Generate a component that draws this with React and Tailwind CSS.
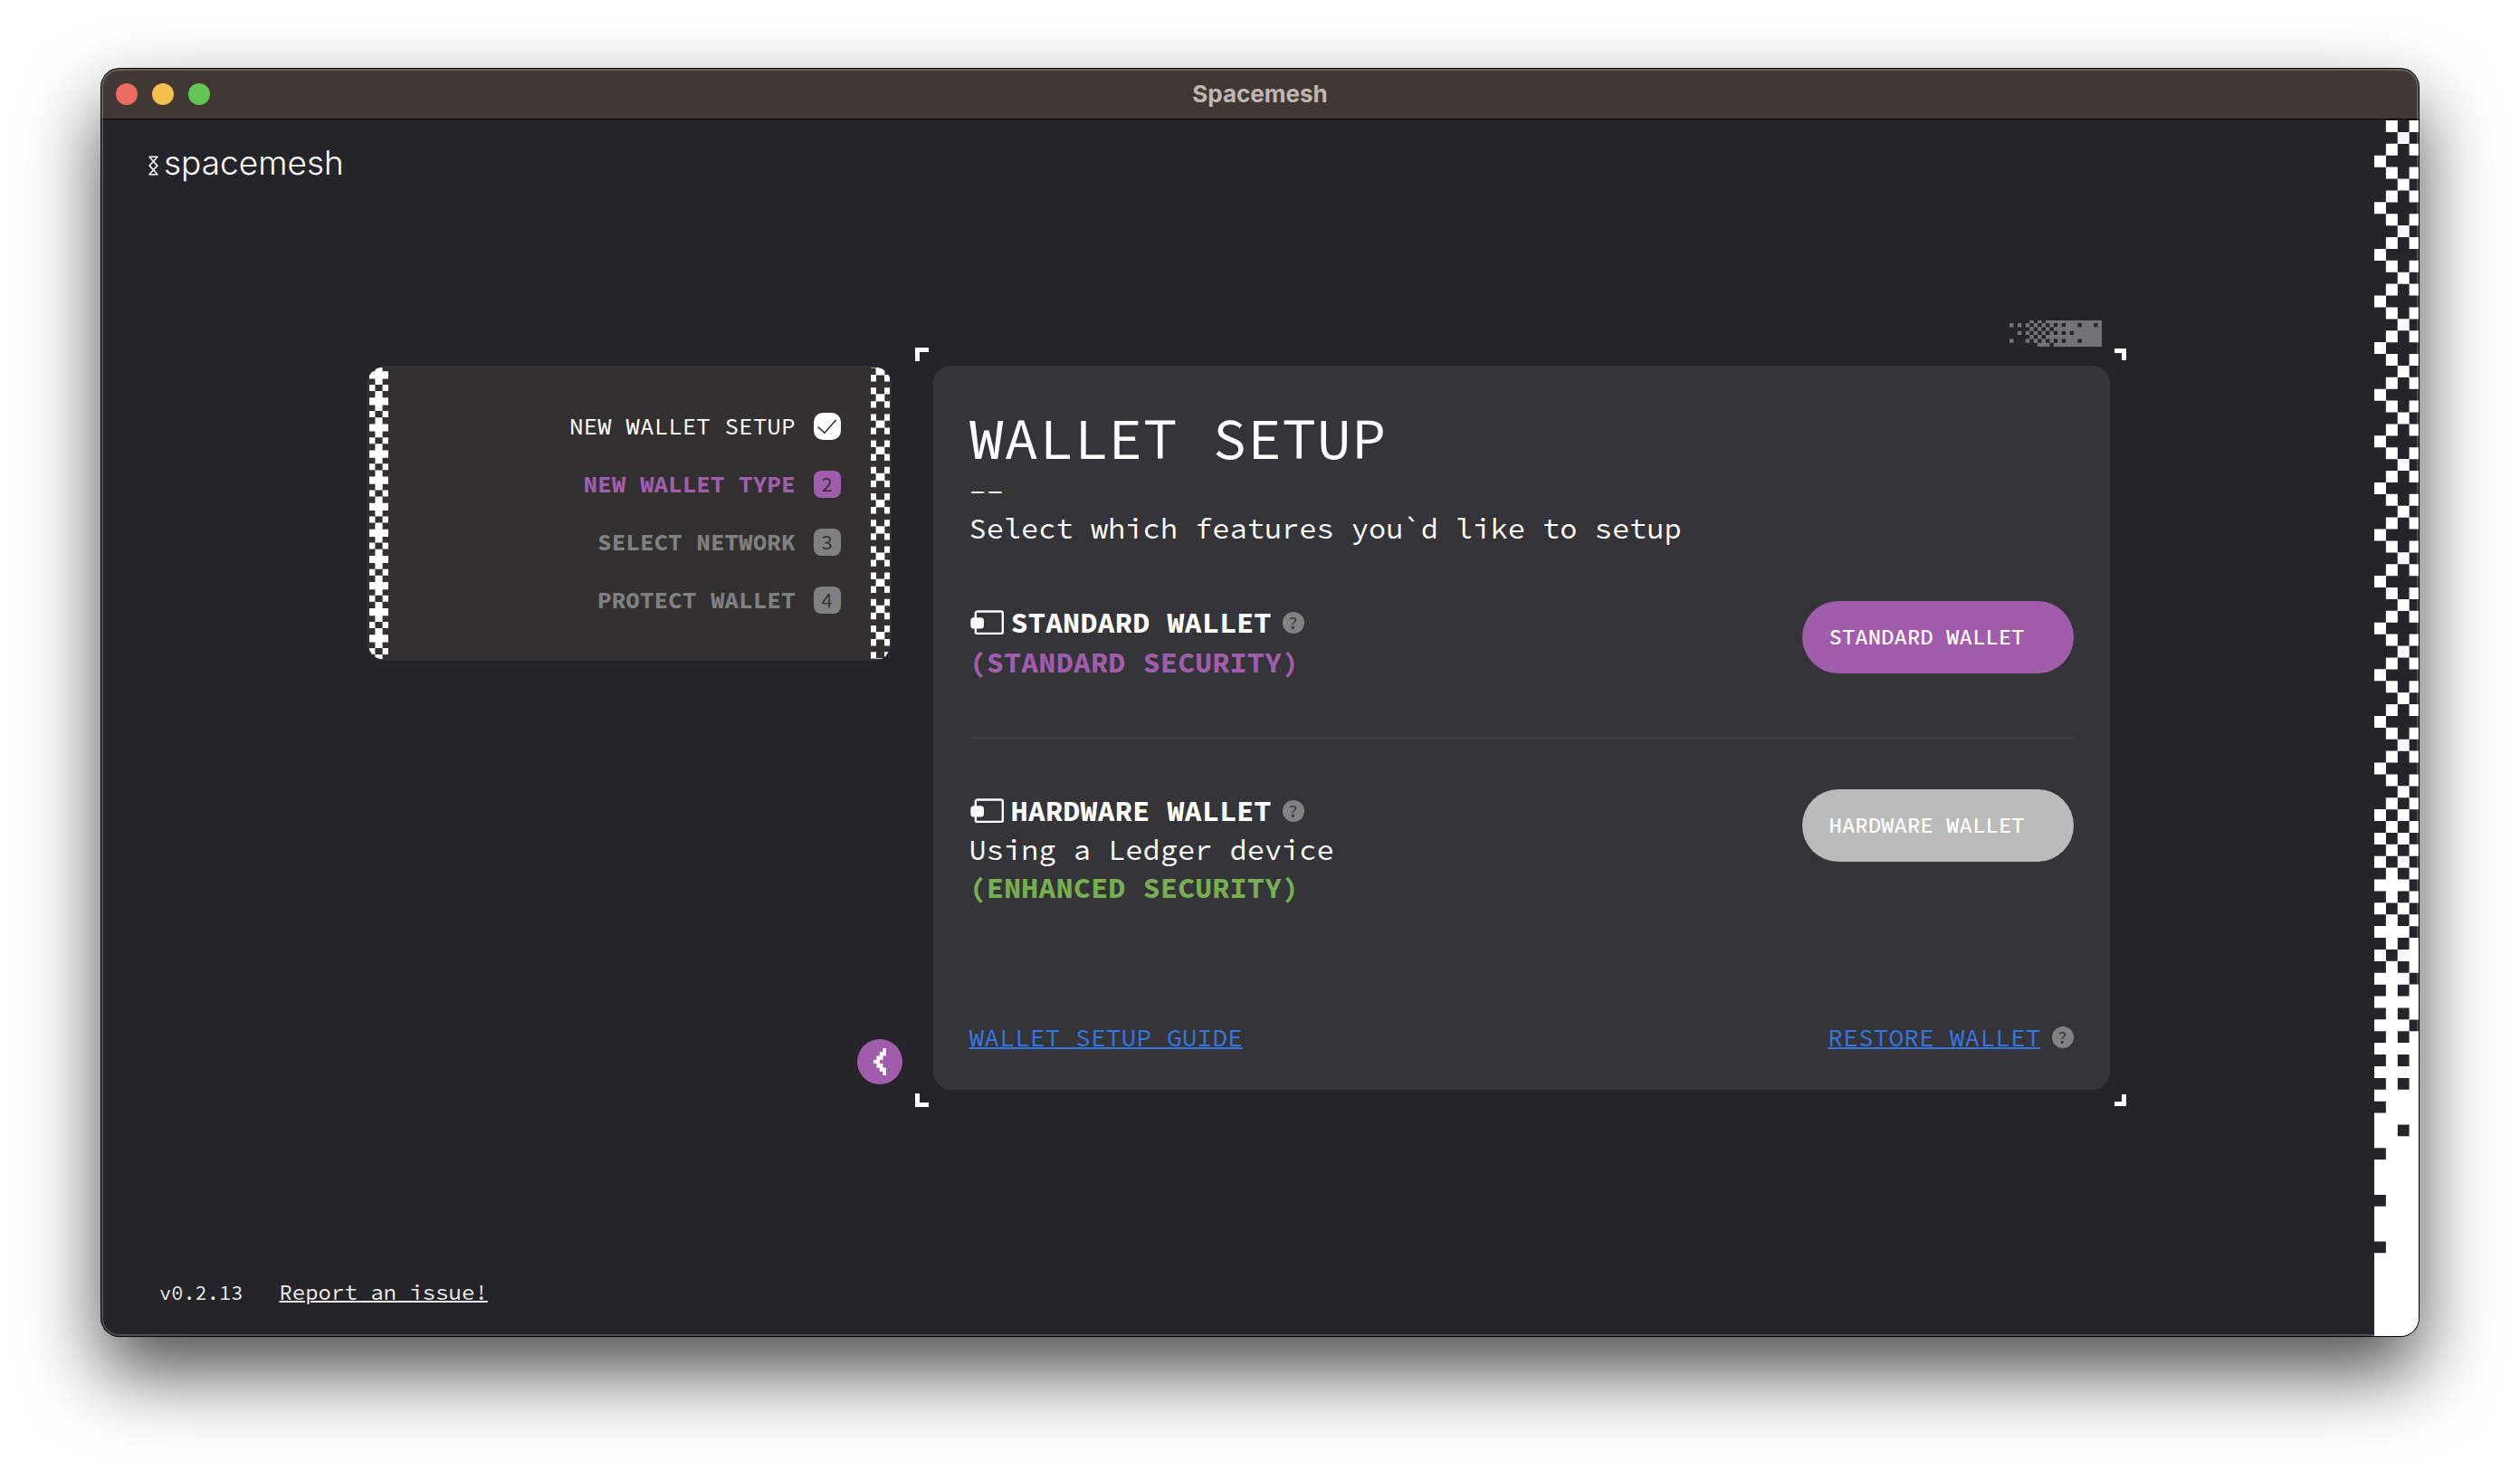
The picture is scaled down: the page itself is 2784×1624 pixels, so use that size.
const STEPS = [
  { label: 'NEW WALLET SETUP', state: 'done' },
  { label: 'NEW WALLET TYPE', state: 'current' },
  { label: 'SELECT NETWORK', state: 'todo' },
  { label: 'PROTECT WALLET', state: 'todo' },
];

/* Filled columns (1 to 4) for each row of the checkered edge, top to bottom. */
const EDGE_ROWS = [
  ...Array.from({ length: 57 }, (_, i) => ['24', '3', '24', '1'][i % 4]),
  '3', '24', '13', '24', '13', '24', '13', '24', '123', '24', '13', '24',
  '123', '24', '134', '24', '123', '24', '1234', '24', '123', '24', '1234',
  '24', '1234', '24', '1234', '234', '1234', '124', '1234', '234', '1234',
  '1234', '1234', '234', '1234', '1234', '1234', '234', '1234', '1234',
  '1234', '1234', '1234', '1234', '1234', '1234',
];

const DITHER_ROWS = [
  '.....#.#.##############',
  '#.#.#.#.#.#.#.###.###.#',
  '.....#.#.#.############',
  '..#.#.#.#.#.#.#.#######',
  '.....#.#.##############',
  '#...#.#.#.#.#.###.#####',
  '.......###.############',
];

function CheckeredEdge() {
  const d = EDGE_ROWS.map((cols, r) =>
    [...cols]
      .map((c) => `M${(Number(c) - 1) * 12.6} ${(r * 12.9 + 1).toFixed(1)}h12.7v13h-12.7z`)
      .join('')
  ).join('');
  return (
    <svg className="absolute inset-0 h-full w-full" viewBox="0 0 48 1344" preserveAspectRatio="none" aria-hidden="true">
      <path d={d} fill="#fff" />
    </svg>
  );
}

function Dither() {
  const d = DITHER_ROWS.map((row, r) =>
    [...row].map((c, k) => (c === '#' ? `M${k * 20} ${r * 20}h20.4v20.4h-20.4z` : '')).join('')
  ).join('');
  return (
    <svg
      className="absolute right-[9px] bottom-full mb-[21px] h-[29px] w-[102px]"
      viewBox="0 6 460 134"
      preserveAspectRatio="none"
      aria-hidden="true"
    >
      <path d={d} fill="#737276" />
    </svg>
  );
}

function PlusStrip() {
  return (
    <svg className="absolute inset-y-0.5 left-[3px] h-[322px] w-[21px]" viewBox="0 3 21 322" aria-hidden="true">
      <clipPath id="plus-clip">
        <path d="M0 3H21V325H12Q4 323 0 315V12Q4 5 12 3z" />
      </clipPath>
      <g fill="#fff" clipPath="url(#plus-clip)">
        {Array.from({ length: 12 }, (_, i) => {
          const y = i * 29.1;
          return (
            <path
              key={i}
              d={`M6.4 ${y}h8.2v22h-8.2zM0 ${y + 7.2}h21v8.2h-21zM0 ${y + 22}h6.4v7h-6.4zM14.6 ${y + 22}h6.4v7h-6.4z`}
            />
          );
        })}
      </g>
    </svg>
  );
}

function CrossStrip() {
  return (
    <svg className="absolute inset-y-0.5 right-0.5 h-[322px] w-[21px]" viewBox="0 3 21 322" aria-hidden="true">
      <clipPath id="cross-clip">
        <path d="M0 3H8Q17 5 21 14V314Q17 323 13 325H0z" />
      </clipPath>
      <g fill="#fff" clipPath="url(#cross-clip)">
        {Array.from({ length: 12 }, (_, i) => {
          const y = i * 29.2 - 4;
          return (
            <path
              key={i}
              d={`M0 ${y}h6v7.4h-6zM15 ${y}h6v7.4h-6zM5.6 ${y + 7}h9.8v8.4h-9.8zM0 ${y + 15}h6v7.4h-6zM15 ${y + 15}h6v7.4h-6z`}
            />
          );
        })}
      </g>
    </svg>
  );
}

function Corners() {
  return (
    <div aria-hidden="true">
      <span className="absolute -top-5 -left-5 size-[15px] border-t-[5px] border-l-[5px] border-white" />
      <span className="absolute -top-[19px] -right-[18px] size-[13px] border-t-[5px] border-r-[5px] border-white" />
      <span className="absolute -bottom-[19px] -left-5 size-[15px] border-b-[5px] border-l-[5px] border-white" />
      <span className="absolute -right-[18px] -bottom-[18px] size-[13px] border-r-[5px] border-b-[5px] border-white" />
    </div>
  );
}

function WalletIcon() {
  return (
    <svg className="h-[28px] w-[38px]" viewBox="0 0 38 28" aria-hidden="true">
      <rect x="6.8" y="1.5" width="30" height="24.4" rx="2" fill="none" stroke="#fff" strokeWidth="2.4" />
      <rect x="1.3" y="8.2" width="14.6" height="12.4" rx="3.6" fill="#fff" />
    </svg>
  );
}

function Help({ label }) {
  return (
    <button
      type="button"
      aria-label={label}
      className="flex size-6 items-center justify-center rounded-full bg-[#828282] text-[20px] leading-6 text-[#353439]"
    >
      ?
    </button>
  );
}

function StepBadge({ state, number }) {
  if (state === 'done') {
    return (
      <span className="size-[30px] rounded-[10px] bg-white">
        <svg viewBox="0 0 30 30" aria-hidden="true">
          <path d="M4.5 15.7 12 22.2 24.7 7.7" fill="none" stroke="#333030" strokeWidth="1.6" />
        </svg>
      </span>
    );
  }
  return (
    <span
      className={
        'flex size-[30px] items-center justify-center rounded-[8px] text-[22px] leading-[30px] font-normal text-[#333030] ' +
        (state === 'current' ? 'bg-[#a05dab]' : 'bg-[#808080]')
      }
    >
      {number}
    </span>
  );
}

function Steps() {
  return (
    <nav aria-label="Setup steps" className="relative w-full overflow-hidden rounded-[20px] bg-[#333031] py-[52px] pr-14">
      <PlusStrip />
      <CrossStrip />
      <ol className="flex flex-col gap-[34px]">
        {STEPS.map((step, i) => (
          <li
            key={step.label}
            className={
              'flex items-center justify-end gap-5 text-[26px] leading-[30px] ' +
              { done: 'text-white', current: 'font-bold text-[#a05dab]', todo: 'font-bold text-[#808080]' }[step.state]
            }
          >
            {step.label}
            <StepBadge state={step.state} number={i + 1} />
          </li>
        ))}
      </ol>
    </nav>
  );
}

function WalletOption({ name, helpLabel, children, buttonClass }) {
  return (
    <section className="flex items-start justify-between">
      <div className="pt-0.5 text-[32px] leading-[44px]">
        <div className="flex items-center">
          <WalletIcon />
          <h2 className="mr-3 ml-2 font-bold">{name}</h2>
          <Help label={helpLabel} />
        </div>
        {children}
      </div>
      <button
        type="button"
        className={'h-20 w-[300px] rounded-full px-[30px] text-left text-[24px] leading-8 font-medium text-white ' + buttonClass}
      >
        {name}
      </button>
    </section>
  );
}

export default function App() {
  return (
    <div className="flex min-h-screen flex-col bg-white px-28 pt-[76px] pb-[148px]">
      <div
        className={
          'relative flex flex-1 flex-col overflow-hidden rounded-[20px] bg-[#252429] text-white shadow-[0_0_0_1px_#000,0_40px_84px_rgba(0,0,0,0.7)] ' +
          'font-["Source_Code_Pro","Liberation_Mono",monospace]'
        }
      >
        <header className="grid h-14 grid-cols-[1fr_auto_1fr] items-center border-b border-black bg-[#413834] px-4">
          <div className="flex gap-4">
            <button type="button" aria-label="Close" className="size-6 rounded-full bg-[#ec6a5e]" />
            <button type="button" aria-label="Minimize" className="size-6 rounded-full bg-[#f4bf4f]" />
            <button type="button" aria-label="Zoom" className="size-6 rounded-full bg-[#61c554]" />
          </div>
          <span className="font-[Inter,sans-serif] text-[26px] leading-8 font-bold text-[#beb7b3]">Spacemesh</span>
        </header>

        <div className="flex flex-1">
          <div className="flex flex-1 flex-col">
            <div className="flex-1 basis-0">
              <div className="flex items-start gap-1.5 pt-7 pl-[52px]">
                <svg className="mt-3 h-[22px] w-[11px]" viewBox="0 0 11 22" aria-hidden="true">
                  <path
                    d="M.5 1.2H10.5M.5 20.8H10.5M1.2 1.5 9.8 11 1.2 20.5M9.8 1.5 1.2 11 9.8 20.5"
                    fill="none"
                    stroke="#fff"
                    strokeWidth="1.6"
                  />
                </svg>
                <span className="font-[Inter,sans-serif] text-[37px] leading-10 font-light">spacemesh</span>
              </div>
            </div>

            <div className="mx-auto flex w-full max-w-[1926px] gap-[46px]">
              <div className="flex w-[580px] shrink-0 flex-col items-end justify-between">
                <Steps />
                <button
                  type="button"
                  aria-label="Back"
                  className="-mr-3 mb-1.5 flex size-[50px] items-center justify-center rounded-full bg-[#a05dab]"
                >
                  <svg className="h-[30px] w-[14px]" viewBox="0 0 14 30" aria-hidden="true">
                    <path
                      d="M10.2 0H13.8V8.6H10.4V12.9H7V17.1H10.4V21.4H13.8V30H10.2V25.7H6.8V21.4H3.4V17.1H0V12.9H3.4V8.6H6.8V4.3H10.2z"
                      fill="#fff"
                    />
                  </svg>
                </button>
              </div>

              <div className="relative flex-1">
                <Corners />
                <Dither />
                <main className="flex min-h-[800px] flex-col rounded-[20px] bg-[#353439] p-10">
                  <h1 className="text-[64px] leading-[80px]">WALLET SETUP</h1>
                  <p className="text-[32px] leading-10">--</p>
                  <p className="text-[32px] leading-10">Select which features you`d like to setup</p>

                  <div className="mt-[60px] flex flex-col">
                    <WalletOption name="STANDARD WALLET" helpLabel="About standard wallet" buttonClass="bg-[#a05dab]">
                      <p className="font-bold text-[#a05dab]">(STANDARD SECURITY)</p>
                    </WalletOption>
                    <hr className="mt-[60px] mb-14 border-t-2 border-[#3f3f40]" />
                    <WalletOption name="HARDWARE WALLET" helpLabel="About hardware wallet" buttonClass="bg-[#bbbbbb]">
                      <p className="leading-[42px]">Using a Ledger device</p>
                      <p className="leading-[42px] font-bold text-[#76ae50]">(ENHANCED SECURITY)</p>
                    </WalletOption>
                  </div>

                  <div className="mt-auto flex items-center justify-between text-[28px] leading-9">
                    <a href="#guide" className="text-[#3575df] underline decoration-2">
                      WALLET SETUP GUIDE
                    </a>
                    <div className="flex items-center gap-3">
                      <a href="#restore" className="text-[#3575df] underline decoration-2">
                        RESTORE WALLET
                      </a>
                      <Help label="About restoring a wallet" />
                    </div>
                  </div>
                </main>
              </div>
            </div>

            <div className="flex flex-1 basis-0 items-end">
              <footer className="flex gap-10 pb-8 pl-16 leading-8 text-[#eeeeee]">
                <span className="text-[22px]">v0.2.13</span>
                <a href="#report" className="text-[24px] underline decoration-2">
                  Report an issue!
                </a>
              </footer>
            </div>
          </div>
          <div className="relative w-[49px]">
            <CheckeredEdge />
          </div>
        </div>
        <div className="pointer-events-none absolute inset-0 rounded-[20px] border-2 border-white/20" />
      </div>
    </div>
  );
}
